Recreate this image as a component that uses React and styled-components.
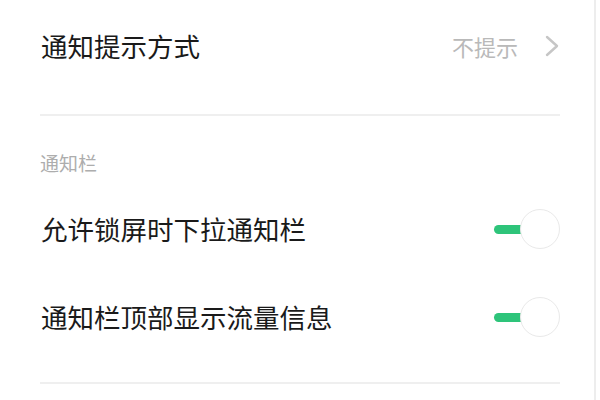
import styled, { createGlobalStyle } from "styled-components";

const GlobalStyle = createGlobalStyle`
  html, body {
    margin: 0;
    padding: 0;
    background: #ffffff;
  }
  body {
    font-family: "Noto Sans CJK SC", "Noto Sans", sans-serif;
  }
`;

const rows = [
  { id: 1, label: "允许锁屏时下拉通知栏", on: true },
  { id: 2, label: "通知栏顶部显示流量信息", on: true },
];

const App = () => {
  return (
    <>
      <GlobalStyle />
      <Page>
        <Content>
          <LinkRow>
            <Label>通知提示方式</Label>
            <Value>
              <ValueText>不提示</ValueText>
              <Chevron viewBox="0 0 14 22" width="14" height="22">
                <polyline
                  points="2,2 12,11 2,20"
                  fill="none"
                  stroke="#c6c6c6"
                  strokeWidth="2.4"
                  strokeLinecap="round"
                  strokeLinejoin="round"
                />
              </Chevron>
            </Value>
          </LinkRow>
          <Divider $top={22} />
          <SectionTitle>通知栏</SectionTitle>
          {rows.map((row) => (
            <SwitchRow key={row.id}>
              <Label>{row.label}</Label>
              <Toggle $on={row.on}>
                <Track $on={row.on} />
                <Knob />
              </Toggle>
            </SwitchRow>
          ))}
          <Divider $top={21} />
        </Content>
        <EdgeLine />
      </Page>
    </>
  );
};

export default App;

export const Page = styled.div`
  display: flex;
  width: 600px;
  height: 400px;
  overflow: hidden;
  background: #ffffff;
`;

export const Content = styled.div`
  width: 594px;
  box-sizing: border-box;
  padding: 0 34px 0 40px;
  display: flex;
  flex-direction: column;
`;

export const EdgeLine = styled.div`
  width: 2px;
  height: 100%;
  background: #ededed;
`;

export const LinkRow = styled.div`
  height: 92px;
  display: flex;
  align-items: center;
  justify-content: space-between;
`;

export const SwitchRow = styled.div`
  height: 88px;
  display: flex;
  align-items: center;
  justify-content: space-between;
`;

export const Label = styled.span`
  font-size: 26.5px;
  line-height: 30px;
  color: #1a1a1a;
  margin-left: 1px;
`;

export const Value = styled.div`
  display: flex;
  align-items: center;
  gap: 27px;
  margin-right: 1px;
`;

export const ValueText = styled.span`
  font-size: 22px;
  line-height: 26px;
  color: #b9b9b9;
`;

export const Chevron = styled.svg`
  display: block;
`;

export const Divider = styled.div`
  height: 2px;
  margin-top: ${(p) => p.$top}px;
  background: #efefef;
`;

export const SectionTitle = styled.div`
  height: 69px;
  box-sizing: border-box;
  padding-top: 36px;
  font-size: 19px;
  line-height: 22px;
  color: #adadad;
`;

export const Toggle = styled.div`
  position: relative;
  width: 66px;
  height: 40px;
  flex-shrink: 0;
`;

export const Track = styled.div`
  position: absolute;
  left: 0;
  top: 16px;
  width: 34px;
  height: 9px;
  border-radius: 5px;
  background: ${(p) => (p.$on ? "#2ec47a" : "#dddddd")};
`;

export const Knob = styled.div`
  position: absolute;
  right: 0;
  top: 0;
  width: 40px;
  height: 40px;
  box-sizing: border-box;
  border-radius: 50%;
  border: 1.5px solid #e9e9e9;
  background: #ffffff;
`;
